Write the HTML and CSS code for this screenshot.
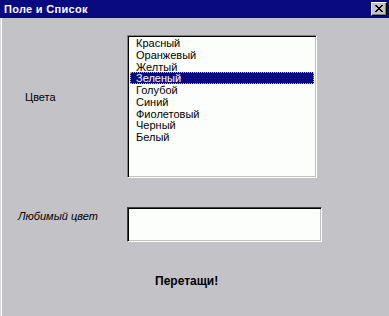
FILE: index.html
```html
<!DOCTYPE html>
<html lang="ru">
<head>
<meta charset="utf-8">
<title>Поле и Список</title>
<link rel="stylesheet" href="styles.css">
</head>
<body>
<div class="window">
  <div class="titlebar">
    <span class="title">Поле и Список</span>
    <span class="close-btn">
      <svg width="8" height="7" viewBox="0 0 8 7"><path d="M0 0h2v1h1v1h2v-1h1v-1h2v1h-1v1h-1v1h-1v1h1v1h1v1h1v1h-2v-1h-1v-1h-2v1h-1v1h-2v-1h1v-1h1v-1h1v-1h-1v-1h-1z" fill="#000"/></svg>
    </span>
  </div>
  <div class="content">
    <div class="row row-list">
      <div class="label label-colors">Цвета</div>
      <ul class="listbox">
        <li>Красный</li>
        <li>Оранжевый</li>
        <li>Желтый</li>
        <li class="selected">Зеленый</li>
        <li>Голубой</li>
        <li>Синий</li>
        <li>Фиолетовый</li>
        <li>Черный</li>
        <li>Белый</li>
      </ul>
    </div>
    <div class="row row-field">
      <div class="label label-fav">Любимый цвет</div>
      <div class="textfield"></div>
    </div>
    <div class="drag">Перетащи!</div>
  </div>
</div>
</body>
</html>
```

FILE: styles.css
```css
html, body {
  margin: 0;
  padding: 0;
}
body {
  width: 389px;
  height: 316px;
  overflow: hidden;
  background: #c3c2c6;
  font-family: "Liberation Sans", Arial, sans-serif;
  font-size: 11px;
  color: #000;
}
.window {
  width: 389px;
  height: 316px;
  box-sizing: border-box;
  border-left: 1px solid #dcdcdc;
  box-shadow: inset 1px 0 0 #ffffff;
  display: flex;
  flex-direction: column;
}
.titlebar {
  height: 18px;
  background: #0a0a80;
  display: flex;
  align-items: center;
  justify-content: space-between;
  padding: 0 2px 0 4px;
  margin-left: -1px;
}
.title {
  color: #fff;
  font-weight: bold;
  font-size: 11px;
  letter-spacing: 0.3px;
}
.close-btn {
  width: 16px;
  height: 14px;
  box-sizing: border-box;
  background: #c3c2c6;
  border-top: 1px solid #fff;
  border-left: 1px solid #fff;
  border-right: 1px solid #000;
  border-bottom: 1px solid #000;
  box-shadow: inset -1px -1px 0 #808080;
  display: flex;
  align-items: center;
  justify-content: center;
  padding: 0 1px 1px 0;
}
.close-btn svg {
  display: block;
}
.content {
  display: flex;
  flex-direction: column;
}
.row {
  display: grid;
  grid-template-columns: 126px auto;
  align-items: start;
}
.row-list {
  margin-top: 17px;
}
.label {
  line-height: 13px;
}
.label-colors {
  padding-left: 24px;
  padding-top: 56px;
}
.listbox {
  list-style: none;
  margin: 0;
  width: 190px;
  height: 143px;
  box-sizing: border-box;
  padding: 1px 2px 2px;
  background: #fcfefc;
  border-top: 1px solid #808080;
  border-left: 1px solid #808080;
  border-bottom: 1px solid #ffffff;
  border-right: 1px solid #ffffff;
  box-shadow: inset 1px 1px 0 #000, inset -1px -1px 0 #c0c0c0;
}
.listbox li {
  height: 11.75px;
  line-height: 12px;
  padding-left: 6px;
  white-space: nowrap;
  box-sizing: border-box;
}
.listbox li.selected {
  background: #0a0a80;
  color: #fff;
  outline: 1px dotted #c8c864;
  outline-offset: -1px;
}
.row-field {
  margin-top: 29px;
}
.label-fav {
  font-style: italic;
  padding-left: 17px;
  padding-top: 3px;
}
.textfield {
  width: 195px;
  height: 35px;
  box-sizing: border-box;
  background: #fcfefc;
  border-top: 1px solid #404040;
  border-left: 1px solid #404040;
  border-bottom: 1px solid #ffffff;
  border-right: 1px solid #ffffff;
  box-shadow: inset 1px 1px 0 #000, inset -1px -1px 0 #c0c0c0;
}
.drag {
  margin-top: 33px;
  padding-left: 154px;
  font-weight: bold;
  font-size: 12px;
  line-height: 13px;
}
```
